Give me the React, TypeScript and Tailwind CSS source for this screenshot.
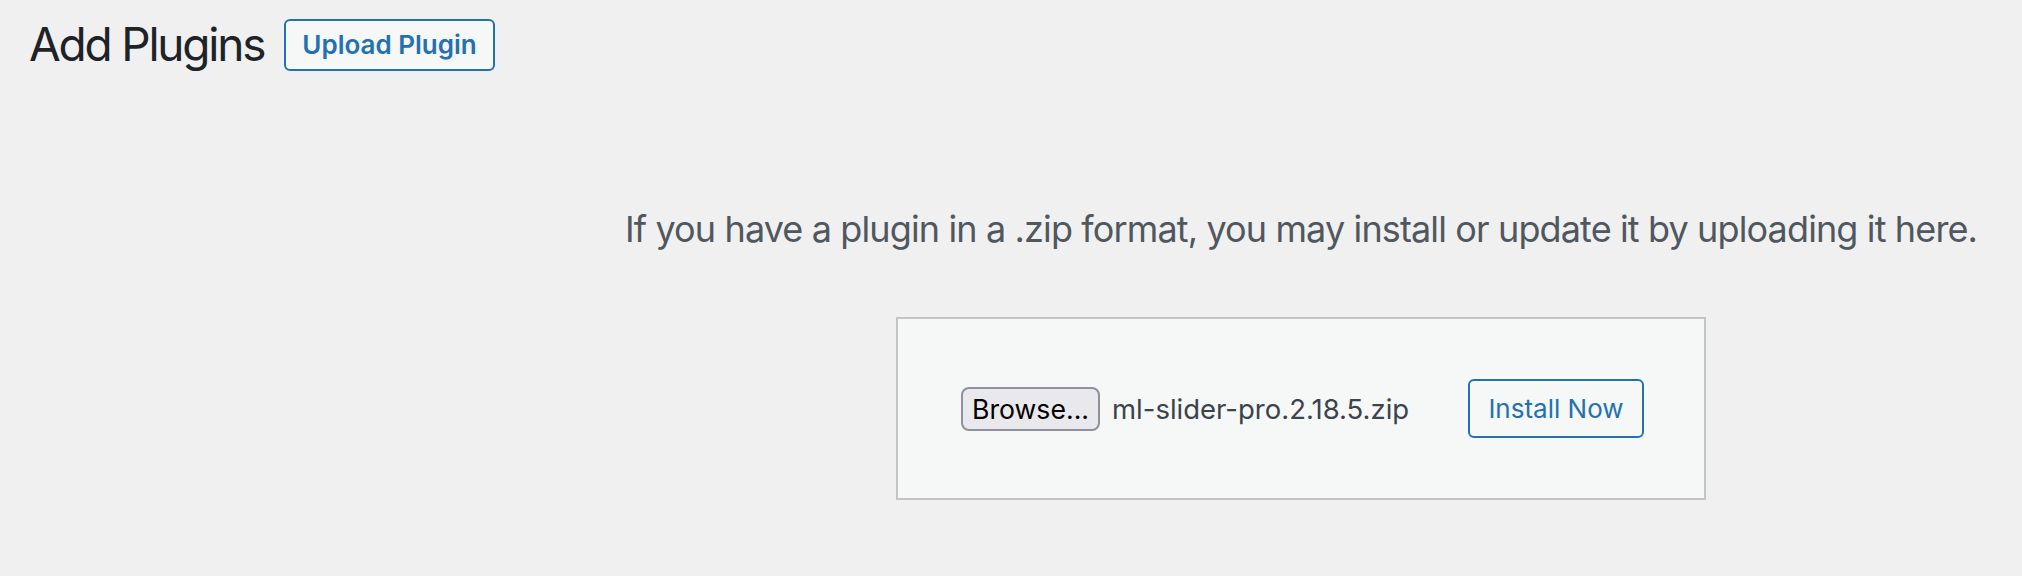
const font = { fontFamily: 'Inter, "Noto Sans", sans-serif' };

const UploadForm = () => (
  <div className="flex w-[810px] items-center justify-between border-2 border-[#c3c4c7] bg-[#f6f7f7] p-[60px]">
    <div className="flex items-center pl-[3px]">
      <button
        type="button"
        className="h-[44px] rounded-[8px] border-2 border-[#8f8f9d] bg-[#e9e9ed] px-[9px] text-[26.67px] leading-[36px] text-black"
      >
        Browse...
      </button>
      <span className="ml-[12px] text-[27.5px] leading-[36px] text-[#3c434a]">
        ml-slider-pro.2.18.5.zip
      </span>
    </div>
    <button
      type="button"
      className="h-[59px] w-[176px] rounded-[6px] border-2 border-[#2271b1] bg-[#f6f7f7] text-[26px] leading-[55px] text-[#2271b1]"
    >
      Install Now
    </button>
  </div>
);

export default function App() {
  return (
    <div className="h-[576px] w-full bg-[#f0f0f1]" style={font}>
      <header className="flex items-start pl-[29px] pt-[14px]">
        <h1 className="text-[46px] font-normal leading-[60px] tracking-[-2.2px] text-[#1d2327]">
          Add Plugins
        </h1>
        <button
          type="button"
          className="ml-[20px] mt-[5px] h-[52px] rounded-[6px] border-2 border-[#2271b1] bg-[#f6f7f7] px-[16px] text-[26px] font-semibold leading-[48px] text-[#2271b1]"
        >
          Upload Plugin
        </button>
      </header>

      <section className="flex flex-col items-center pl-[580px] pt-[130px]">
        <p className="text-center text-[36px] leading-[50px] tracking-[-0.87px] text-[#50575e]">
          If you have a plugin in a .zip format, you may install or update it by
          uploading it here.
        </p>
        <div className="mt-[63px]">
          <UploadForm />
        </div>
      </section>
    </div>
  );
}
